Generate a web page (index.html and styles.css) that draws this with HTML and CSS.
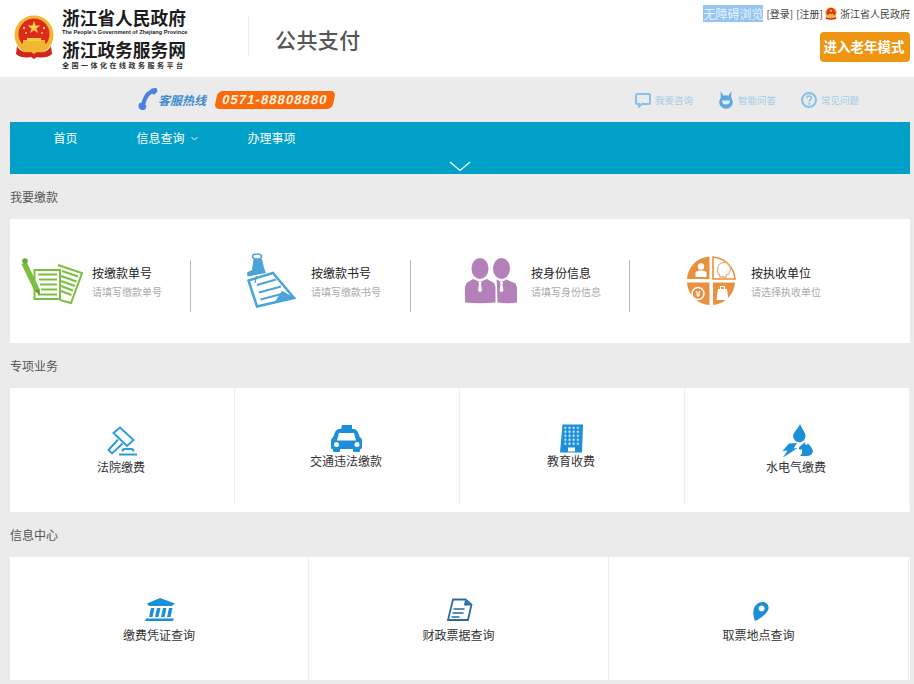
FILE: index.html
```html
<!DOCTYPE html>
<html lang="zh-CN">
<head>
<meta charset="utf-8">
<title>公共支付</title>
<link rel="stylesheet" href="styles.css">
</head>
<body>
<svg class="defs" width="0" height="0" aria-hidden="true">
  <symbol id="emblem" viewBox="0 0 40 44">
    <circle cx="20" cy="20" r="19.500" fill="#f2b632"/>
    <circle cx="20" cy="19" r="15.500" fill="#dc2a1e"/>
    <polygon points="20,6 21.600,10.600 26.400,10.600 22.500,13.400 24,18 20,15.200 16,18 17.500,13.400 13.600,10.600 18.400,10.600" fill="#f7cf4a"/>
    <circle cx="10" cy="13" r="1.200" fill="#f7cf4a"/>
    <circle cx="30" cy="13" r="1.200" fill="#f7cf4a"/>
    <circle cx="12" cy="18" r="1" fill="#f7cf4a"/>
    <circle cx="28" cy="18" r="1" fill="#f7cf4a"/>
    <path d="M9 25h22v3l2 2v5H7v-5l2-2z" fill="#f2b632"/>
    <path d="M13 23h14v3H13z" fill="#f7cf4a"/>
    <path d="M3 31c3 6 9 7 14 6l3 2 3-2c5 1 11 0 14-6l1 8c-4 4-11 4-15 3l-3 2-3-2c-4 1-11 1-15-3z" fill="#d3241a"/>
  </symbol>
</svg>

<header class="topbar">
  <svg class="logo-emblem" width="40" height="44"><use href="#emblem"/></svg>
  <div class="logo-text">
    <div class="logo-name">浙江省人民政府</div>
    <div class="logo-en">The People's Government of Zhejiang Province</div>
    <div class="logo-name logo-name-second">浙江政务服务网</div>
    <div class="logo-slogan">全国一体化在线政务服务平台</div>
  </div>
  <div class="topbar-divider"></div>
  <div class="site-title">公共支付</div>
  <div class="topbar-right">
    <div class="toplinks">
      <span class="access">无障碍浏览</span>
      <span class="toplink">[登录]</span>
      <span class="toplink">[注册]</span>
      <svg class="mini-emblem" width="12" height="13"><use href="#emblem"/></svg>
      <span class="toplink-gov">浙江省人民政府</span>
    </div>
    <button class="elder">进入老年模式</button>
  </div>
</header>

<div class="wrap">
  <div class="hotline">
    <svg class="phone" width="20" height="23" viewBox="138 88 20 23">
      <path d="M156 90.500c-7 .5-11.500 6.500-13 15" fill="none" stroke="#4c7fe4" stroke-width="4"/>
      <path d="M151.500 88.500l5-.5 1 3.500-3 3-4.500-1z" fill="#4c7fe4"/>
      <path d="M139 103.500l4-1.500 3.500 4-1 3c-1 1-3.500 1.500-5 .5-2-1-2.500-4-1.500-6z" fill="#4c7fe4"/>
    </svg>
    <span class="hotline-label">客服热线</span>
    <span class="hotline-pill">0571-88808880</span>
    <div class="helpers">
      <div class="helper">
        <svg width="16" height="16" viewBox="0 0 16 16"><path d="M2 2h12a1 1 0 0 1 1 1v8a1 1 0 0 1-1 1H7l-3 2.500V12H2a1 1 0 0 1-1-1V3a1 1 0 0 1 1-1z" fill="none" stroke="#86c1e8" stroke-width="2"/></svg>
        <span>我要咨询</span>
      </div>
      <div class="helper">
        <svg width="16" height="18" viewBox="0 0 16 18"><path d="M2.500 0L7 7H3zM13.500 0L9 7h4z" fill="#5aa9e0"/><circle cx="8" cy="11" r="6.800" fill="#5aa9e0"/><path d="M4 9.500h8a3 3 0 0 1-8 0z" fill="#dfeef8"/></svg>
        <span>智能问答</span>
      </div>
      <div class="helper">
        <svg width="16" height="16" viewBox="0 0 16 16"><circle cx="8" cy="8" r="7" fill="none" stroke="#86c1e8" stroke-width="2"/><path d="M5.800 6.200c0-3 4.600-3 4.600 0 0 1.800-2.300 1.700-2.300 3.500" fill="none" stroke="#86c1e8" stroke-width="1.600"/><circle cx="8.100" cy="11.800" r="1" fill="#86c1e8"/></svg>
        <span>常见问题</span>
      </div>
    </div>
  </div>

  <nav class="nav">
    <div class="nav-items">
      <a class="nav-item">首页</a>
      <a class="nav-item nav-item-menu">信息查询<svg class="nav-caret" width="7" height="5" viewBox="0 0 7 5"><path d="M.5 1l3 3 3-3" fill="none" stroke="#fff" stroke-width="1"/></svg></a>
      <a class="nav-item">办理事项</a>
    </div>
    <svg class="nav-expand" width="22" height="11" viewBox="0 0 22 11"><path d="M1 1l10 8.500L21 1" fill="none" stroke="#fff" stroke-width="1.200"/></svg>
  </nav>

  <h2 class="section-title">我要缴款</h2>
  <section class="card pay-grid">
    <div class="pay-item pay-first">
      <svg class="pay-icon" width="80" height="60" viewBox="12 251 80 60">
        <g fill="none" stroke="#7cbf40">
          <rect x="34.500" y="270" width="25.500" height="29" stroke-width="2"/>
          <path d="M38 274.500h19M39 279.500h18M40 284.500h17M41 289.500h16M38 294.500h19" stroke-width="2.200"/>
          <path d="M58 265l24 8-11 30-11-3" stroke-width="2"/>
          <path d="M62 271l16 5.500M61 276l15.500 5.500M61 281l14 5M61 286l12 4.500M61 291l10.500 4" stroke-width="2"/>
        </g>
        <path d="M24 263l13 27" stroke="#7cbf40" stroke-width="5.500" fill="none"/>
        <path d="M34.500 291l5-2.500 .5 6.500z" fill="#5d9a2c"/>
        <circle cx="25" cy="261" r="2.800" fill="#6aaa35"/>
      </svg>
      <div class="pay-text"><div class="pay-title">按缴款单号</div><div class="pay-sub">请填写缴款单号</div></div>
    </div>
    <div class="pay-item">
      <svg class="pay-icon" width="80" height="60" viewBox="231 251 80 60">
        <path d="M273 273l21 25-37 8.500-8.500-26z" fill="#fff" stroke="#4ba3d8" stroke-width="2.500"/>
        <path d="M257 285l19-5.500M259 292.500l22-6M260.500 299.500l25-6.500" stroke="#4ba3d8" stroke-width="2.200" fill="none"/>
        <path d="M282 291l14 7.500-21 3z" fill="#4ba3d8"/>
        <ellipse cx="257" cy="256.500" rx="4.500" ry="2.500" fill="none" stroke="#4ba3d8" stroke-width="1.500"/>
        <path d="M253.500 259h8.500l2 9 2 5-18.500 3.500-.5-4 5-2.500z" fill="#4ba3d8"/>
        <path d="M256.500 276l-1.500 7" stroke="#4ba3d8" stroke-width="1.200" fill="none"/>
      </svg>
      <div class="pay-text"><div class="pay-title">按缴款书号</div><div class="pay-sub">请填写缴款书号</div></div>
    </div>
    <div class="pay-item">
      <svg class="pay-icon" width="80" height="60" viewBox="451 251 80 60">
        <g fill="#b480ba">
          <ellipse cx="480" cy="268.500" rx="8.500" ry="10.500"/>
          <ellipse cx="501.500" cy="268.500" rx="8.500" ry="10.500"/>
          <path d="M473 279l7 3 7-3 7 4 1.500 4v15.500c-10 1-20 1-30.500 0v-15.500l1.500-4z"/>
          <path d="M496.500 279.500l5 2.500 5-2.500 9 4 1.500 4v15c-6 1-13 1-19.500 0l-.5-17z"/>
        </g>
        <path d="M478.500 282h3l-.5 2.500 1 6-2 2-2-2 1-6zM500 282h3l-.5 2.500 1 6-2 2-2-2 1-6z" fill="#fff"/>
      </svg>
      <div class="pay-text"><div class="pay-title">按身份信息</div><div class="pay-sub">请填写身份信息</div></div>
    </div>
    <div class="pay-item pay-last">
      <svg class="pay-icon" width="80" height="60" viewBox="671 251 80 60">
        <g fill="#e8913f">
          <path d="M709.500 279v-22.500a24 24 0 0 0-22.500 22.500z"/>
          <path d="M709.500 282.500h-22.500a24 24 0 0 0 22.500 22.500z"/>
          <path d="M713 282.500h22a24 24 0 0 1-22 22.500z"/>
        </g>
        <path d="M713 279v-22a24 24 0 0 1 22 22z" fill="none" stroke="#e8913f" stroke-width="1.600"/>
        <path d="M717.500 269a6.500 6.500 0 1 1 9 6l-.5 2h-6l-.5-2a6.500 6.500 0 0 1-2-6z" fill="none" stroke="#eeb27d" stroke-width="1.300"/>
        <circle cx="701" cy="266.500" r="3.200" fill="#fff"/>
        <path d="M695.500 277v-5l3.500-1.500h4l3.500 1.500v5z" fill="#fff"/>
        <circle cx="698" cy="293.500" r="6" fill="none" stroke="#fff" stroke-width="1.400"/>
        <text class="yen" x="698" y="296.500" text-anchor="middle">¥</text>
        <path d="M718 289h9l1.500 11h-12z" fill="#fff"/>
        <path d="M720.500 289v-2.500h4v2.500" fill="none" stroke="#fff" stroke-width="1.200"/>
      </svg>
      <div class="pay-text"><div class="pay-title">按执收单位</div><div class="pay-sub">请选择执收单位</div></div>
    </div>
  </section>

  <h2 class="section-title">专项业务</h2>
  <section class="card special-grid">
    <div class="cell">
      <svg width="40" height="35" viewBox="100 424 40 35">
        <g fill="none" stroke="#2a9bdc" stroke-width="1.900">
          <path d="M112.500 433l6.500-5.500 13.500 12.500-6.500 6z"/>
          <path d="M117 439.500L107.500 450l3.500 3.500 10.500-10"/>
          <path d="M121.500 451.500c0-1.500 1-2.500 2.500-2.500h6c1.500 0 2.500 1 2.500 2.500"/>
        </g>
        <path d="M118 453.500h18v2h-18z" fill="#2a9bdc"/>
      </svg>
      <div class="cell-label">法院缴费</div>
    </div>
    <div class="cell">
      <svg width="40" height="29" viewBox="326 424 40 29">
        <path d="M342 425h10v4h1.500c2 0 3.500 1 4.300 3l2 5c1.500 1 2.200 2.500 2.200 4v6.500c0 1-.7 1.500-1.500 1.500h-.5v1.500c0 1-.7 1.500-1.500 1.500h-4c-1 0-1.500-.5-1.500-1.500V449h-13v1.500c0 1-.5 1.500-1.500 1.500h-4c-.8 0-1.500-.5-1.500-1.500V449h-.5c-.8 0-1.500-.5-1.500-1.500V441c0-1.500.7-3 2.200-4l2-5c.8-2 2.300-3 4.300-3h1.500z" fill="#1b8fd8"/>
        <path d="M339 433h15l2 7.500h-19z" fill="#fff"/>
        <circle cx="336.500" cy="444.500" r="2.500" fill="#fff"/>
        <circle cx="357" cy="444.500" r="2.500" fill="#fff"/>
      </svg>
      <div class="cell-label">交通违法缴款</div>
    </div>
    <div class="cell">
      <svg width="40" height="29" viewBox="551 424 40 29">
        <defs>
          <pattern id="windows" x="564" y="426.500" width="4.200" height="4" patternUnits="userSpaceOnUse">
            <circle cx="1.300" cy="1.300" r="1.100" fill="#fff"/>
          </pattern>
        </defs>
        <path d="M562.500 424.500h20.500l-1 28h-22z" fill="#1b8fd8"/>
        <path d="M564 426.500h17l-.5 19h-17.500z" fill="url(#windows)"/>
        <path d="M568 447.500h7v4h-7z" fill="#fff"/>
      </svg>
      <div class="cell-label">教育收费</div>
    </div>
    <div class="cell">
      <svg width="40" height="35" viewBox="776 424 40 35">
        <path d="M800 424c2 5 5.500 8.500 5.500 12a6.200 6.200 0 0 1-12.400 0c0-4 5-7 6.900-12z" fill="#1b8fd8"/>
        <path d="M789 443.500l8-.5-3.500 5.500 4-.5-14.500 9.500 4.500-7-5 .5z" fill="#1b8fd8"/>
        <path d="M804.500 442c.5 3.500 2.500 3.500 3.500 1.500 2.500 2.500 5 6 5 8-1 3-3 4.500-6 4.500h-7c2-2 3-4 1.500-7-.8 1-2 1-2.500 0-.5-2.500 3-3.500 5.500-7z" fill="#1b8fd8"/>
      </svg>
      <div class="cell-label">水电气缴费</div>
    </div>
  </section>

  <h2 class="section-title">信息中心</h2>
  <section class="card info-grid">
    <div class="cell cell-info">
      <svg width="40" height="29" viewBox="139 598 40 29">
        <path d="M160 598l15 5.500-3 2.500h-23l-2-2.500z" fill="#1b8fd8"/>
        <path d="M151 608h3.500l-2 9h-3.500zM157 608h3.500l-2 9h-3.500zM163 608h3.500l-2 9h-3.500zM169 608h3.500l-2 9h-3.500z" fill="#1b8fd8"/>
        <path d="M146 618.500h28l-1 2.500h-28z" fill="#1b8fd8"/>
      </svg>
      <div class="cell-label">缴费凭证查询</div>
    </div>
    <div class="cell cell-info">
      <svg width="40" height="29" viewBox="438.500 598 40 29">
        <path d="M452.500 599.500h12.500l6 5-3.500 15.500h-20z" fill="none" stroke="#2c6b9e" stroke-width="1.800"/>
        <path d="M464.500 600l-1 5.500h7z" fill="#2c6b9e"/>
        <path d="M453 609h11M452 613h11M451 617h8" stroke="#2c6b9e" stroke-width="1.500" fill="none"/>
      </svg>
      <div class="cell-label">财政票据查询</div>
    </div>
    <div class="cell cell-info">
      <svg width="40" height="29" viewBox="738.500 598 40 29">
        <path fill-rule="evenodd" d="M754.500 621c-1.500-3-2-8-1.500-11 .8-4.500 5-8 9-8 4 0 6.500 3 6 6.500-.6 4.500-8 10-13.500 12.500zM761 605.500a3 3 0 1 0 .1 0z" fill="#1b8fd8"/>
      </svg>
      <div class="cell-label">取票地点查询</div>
    </div>
  </section>
</div>
</body>
</html>
```

FILE: styles.css
```css
* { box-sizing: border-box; }

html, body {
  margin: 0;
  padding: 0;
}

body {
  height: 684px;
  overflow: hidden;
  background: #ebebeb;
  color: #333;
  font-family: "Noto Sans CJK SC", "Liberation Sans", sans-serif;
  font-size: 12px;
}

.defs { position: absolute; }

.topbar {
  display: flex;
  align-items: flex-start;
  height: 77px;
  padding: 0 4px 0 14px;
  background: #fff;
}

.logo-emblem { margin-top: 15px; flex: none; }

.logo-text {
  width: 126px;
  margin-left: 8px;
  padding-top: 8px;
  color: #1c1c1c;
  font-weight: 700;
}

.logo-name {
  font-size: 17.700px;
  line-height: 19px;
  white-space: nowrap;
}

.logo-name-second { margin-top: 4px; }

.logo-en {
  margin-top: 2px;
  font-family: "Liberation Sans", sans-serif;
  font-size: 5.600px;
  line-height: 7px;
  white-space: nowrap;
}

.logo-slogan {
  margin-top: 1px;
  color: #333;
  font-size: 7px;
  line-height: 10px;
  letter-spacing: 2.500px;
  white-space: nowrap;
}

.topbar-divider {
  width: 1px;
  height: 41px;
  margin: 15px 0 0 60px;
  background: #eee;
}

.site-title {
  margin: 24px 0 0 26px;
  color: #555;
  font-size: 21px;
  font-weight: 500;
  line-height: 30px;
  letter-spacing: .4px;
}

.topbar-right {
  display: flex;
  flex-direction: column;
  align-items: flex-end;
  margin-left: auto;
  padding-top: 5px;
}

.toplinks {
  display: flex;
  align-items: center;
  height: 17px;
  font-size: 10px;
  color: #444;
}

.access {
  background: #93c4f2;
  color: #e9f4ff;
  font-size: 12px;
  line-height: 17px;
}

.toplink {
  margin-left: 3px;
  line-height: 17px;
}

.toplink-gov { line-height: 17px; }

.mini-emblem { margin: 0 3px 0 2px; }

.elder {
  width: 90px;
  height: 30px;
  margin-top: 10px;
  padding: 0 2px 3px 0;
  border: 0;
  border-radius: 4px;
  background: #ee9611;
  color: #fff;
  font-family: inherit;
  font-size: 13.500px;
  font-weight: 700;
}

.wrap {
  width: 900px;
  margin-left: 10px;
}

.hotline {
  display: flex;
  align-items: center;
  height: 45px;
  padding: 0 51px 0 128px;
}

.phone { flex: none; }

.hotline-label {
  width: 48px;
  color: #3f8bd0;
  font-size: 12px;
  font-weight: 700;
  font-style: italic;
  line-height: 18px;
  white-space: nowrap;
}

.hotline-pill {
  display: block;
  width: 118px;
  height: 18px;
  margin-left: 10px;
  border-radius: 5px;
  background: #fa6a0a;
  color: #fff6e6;
  font-family: "Liberation Sans", sans-serif;
  font-size: 13px;
  font-weight: 700;
  line-height: 18px;
  letter-spacing: 1.100px;
  text-align: center;
  transform: skewX(-12deg);
}

.helpers {
  display: flex;
  gap: 25px;
  margin-left: auto;
}

.helper {
  display: flex;
  align-items: center;
  gap: 4px;
  color: #a3cbe8;
  font-size: 9.500px;
  line-height: 16px;
  white-space: nowrap;
}

.nav {
  display: flex;
  flex-direction: column;
  align-items: center;
  height: 52px;
  background: #00a0c9;
}

.nav-items {
  display: flex;
  align-self: stretch;
  height: 39px;
  padding: 7px 0 0 4px;
}

.nav-item {
  display: flex;
  justify-content: center;
  align-items: center;
  gap: 6px;
  width: 103px;
  height: 18px;
  color: #fff;
  font-size: 12px;
  line-height: 18px;
}

.nav-item-menu { padding-right: 3px; }

.nav-caret { flex: none; }

.nav-expand { display: block; }

.section-title {
  height: 45px;
  margin: 0;
  color: #555;
  font-size: 12px;
  font-weight: 400;
  line-height: 45px;
}

.card { background: #fff; }

.pay-grid {
  display: grid;
  grid-template-columns: 181px 220px 219px 1fr;
  height: 124px;
  padding-top: 41px;
}

.pay-item {
  display: flex;
  height: 52px;
  border-right: 1px solid #bbb;
}

.pay-last { border-right: 0; }

.pay-icon {
  flex: none;
  margin: -9px 0 0 40px;
}

.pay-first .pay-icon { margin-left: 2px; }

.pay-last .pay-icon { margin-left: 41px; }

.pay-text { white-space: nowrap; }

.pay-title {
  padding-top: 3px;
  color: #222;
  font-size: 12px;
  line-height: 20px;
}

.pay-sub {
  color: #aaa;
  font-size: 10px;
  line-height: 18px;
}

.yen {
  fill: #fff;
  font-family: "Liberation Sans", sans-serif;
  font-size: 8.500px;
  font-weight: 700;
}

.special-grid {
  display: grid;
  grid-template-columns: repeat(4, 1fr);
  height: 124px;
}

.cell {
  display: flex;
  flex-direction: column;
  align-items: center;
  height: 117px;
  padding: 36px 2px 0 0;
  border-right: 1px solid #eee;
}

.cell svg { display: block; flex: none; }

.cell-label {
  color: #333;
  font-size: 12px;
  line-height: 16px;
  white-space: nowrap;
}

.info-grid {
  display: grid;
  grid-template-columns: 299px 300px 300px;
  height: 123px;
}

.cell-info {
  height: 123px;
  padding: 41px 0 0;
}
```
